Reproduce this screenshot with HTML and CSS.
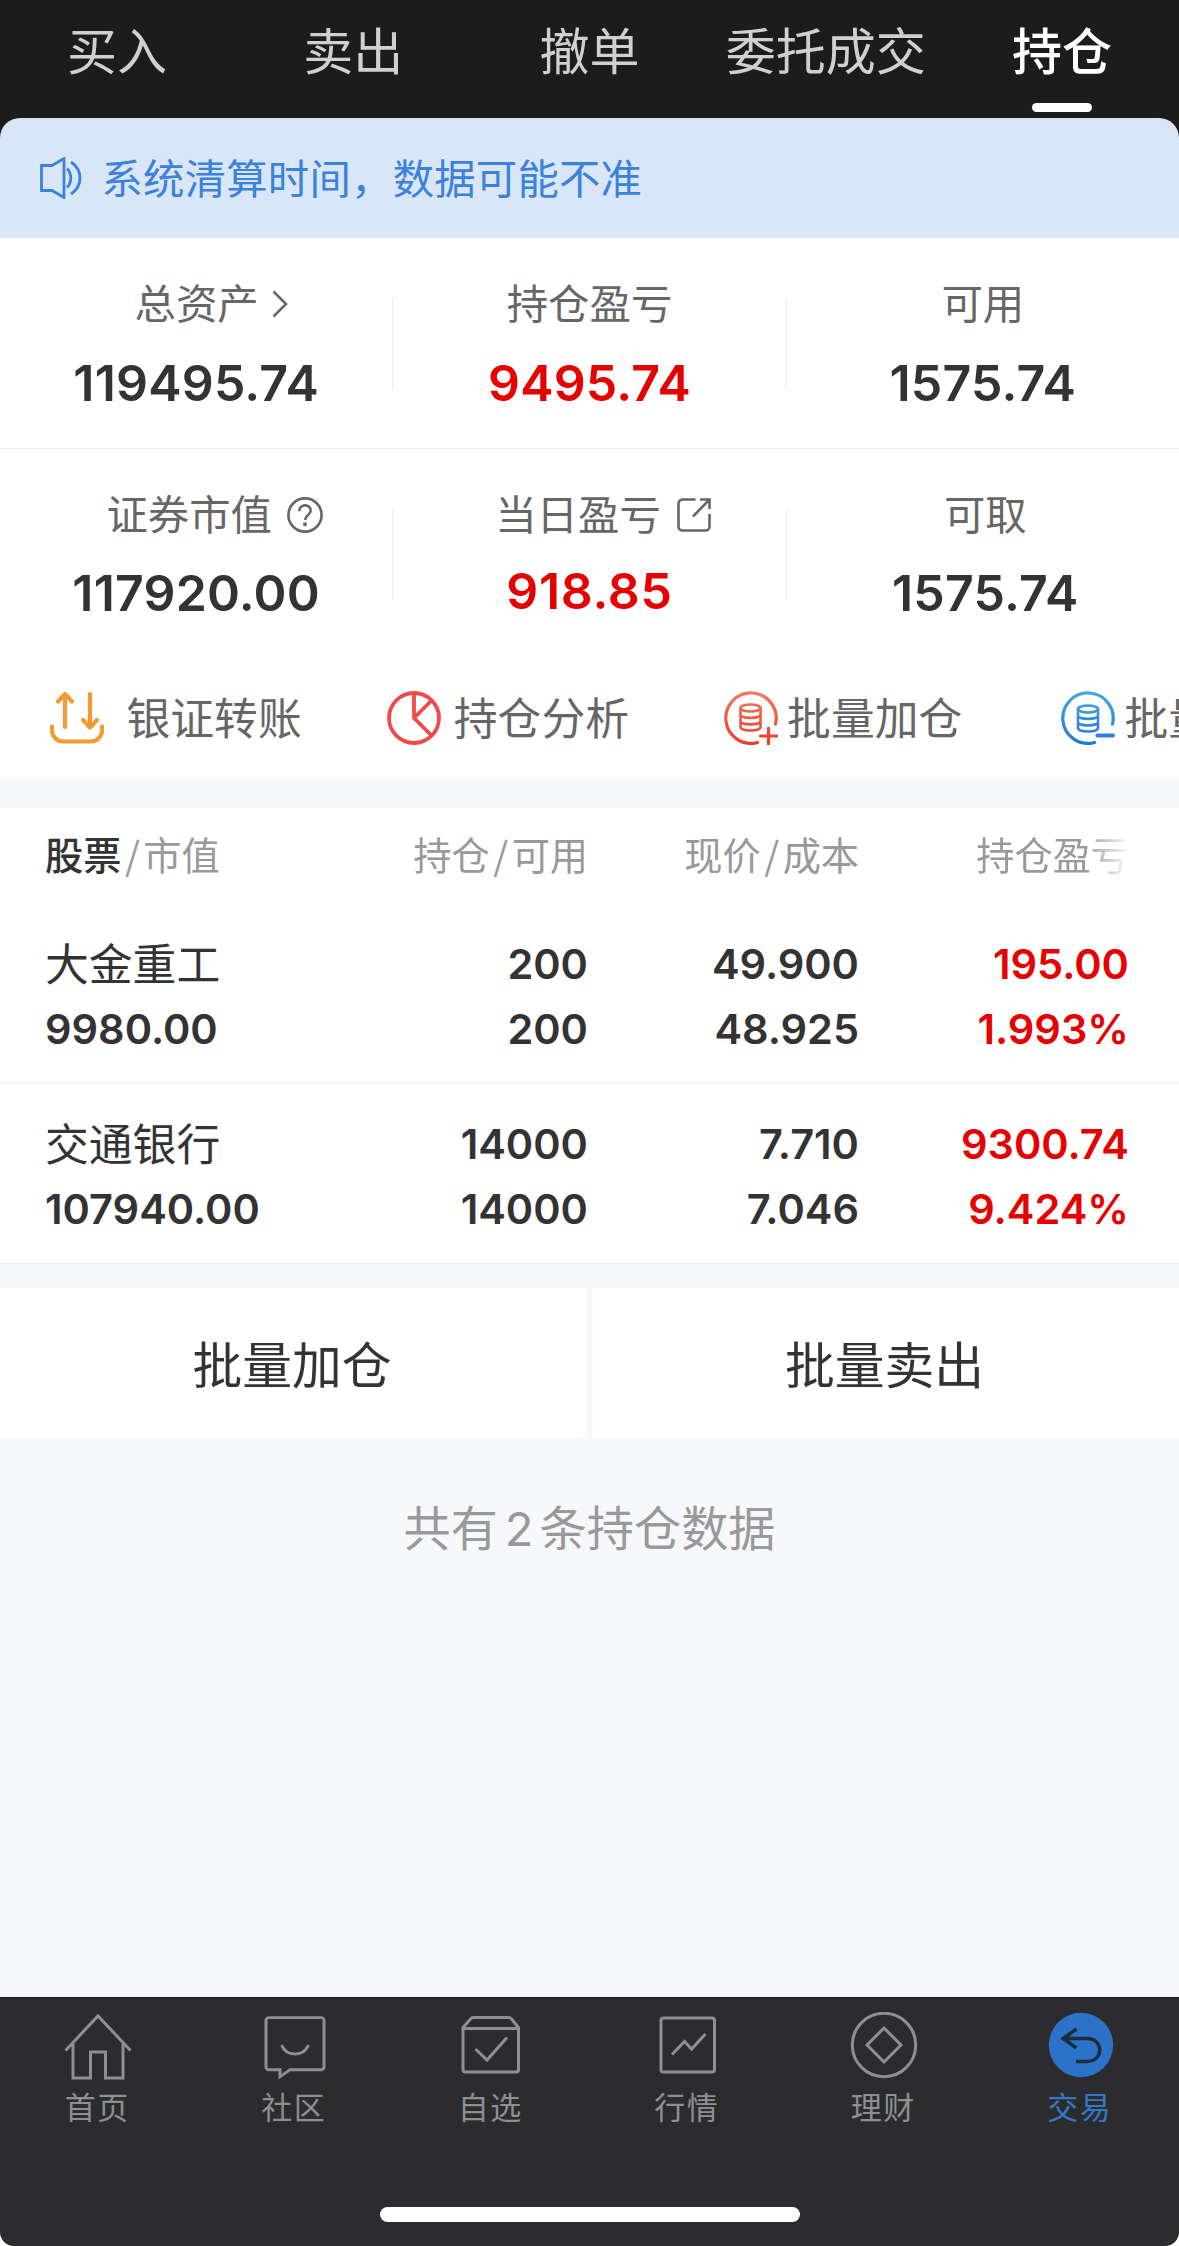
FILE: index.html
```html
<!DOCTYPE html>
<html lang="zh-CN">
<head>
  <meta charset="utf-8">
  <title>持仓</title>
  <meta name="viewport" content="width=device-width, initial-scale=1">
  <link rel="stylesheet" href="styles.css">
</head>
<body>

<div class="page">

  <div class="top">
    <nav class="tabs">
      <a class="tab">买入</a>
      <a class="tab">卖出</a>
      <a class="tab">撤单</a>
      <a class="tab">委托成交</a>
      <a class="tab active">持仓</a>
    </nav>
    <div class="notice">
      <svg class="notice-icon" width="42" height="42" viewBox="0 0 42 42" fill="none" stroke="#3b82dc" stroke-width="2.8">
        <path d="M1.5 8.5H12L24 1.5v39L12 33.5H1.5z"/>
        <path d="M27 11.5c5 5 5 14 0 19"/>
        <path d="M31 5c12 8 12 24 0 32"/>
      </svg>
      <span>系统清算时间，数据可能不准</span>
    </div>
  </div>

  <div class="stats">
    <div class="stat">
      <div class="label">总资产<svg class="arrow" width="16" height="28" viewBox="0 0 16 28" fill="none" stroke="#666" stroke-width="2.5"><path d="M1.5 1.5L14 14 1.5 26.5"/></svg></div>
      <div class="value">119495.74</div>
    </div>
    <div class="split"></div>
    <div class="stat">
      <div class="label">持仓盈亏</div>
      <div class="value red">9495.74</div>
    </div>
    <div class="split"></div>
    <div class="stat">
      <div class="label">可用</div>
      <div class="value">1575.74</div>
    </div>
  </div>

  <div class="stats second">
    <div class="stat">
      <div class="label">证券市值<svg class="help" width="36" height="36" viewBox="0 0 36 36" fill="none" stroke="#666" stroke-width="2.6"><circle cx="18" cy="18" r="16.6"/><path d="M12.3 14.2c0-7.6 11.4-7.6 11.4-.7 0 4.2-5.5 4.6-5.5 9.5"/><circle cx="18" cy="27.3" r="2" fill="#666" stroke="none"/></svg></div>
      <div class="value">117920.00</div>
    </div>
    <div class="split"></div>
    <div class="stat">
      <div class="label">当日盈亏<svg class="share" width="34" height="34" viewBox="0 0 34 34" fill="none" stroke="#666" stroke-width="2.6"><path d="M18.5 1.5H5.5a4 4 0 0 0-4 4v23a4 4 0 0 0 4 4h23a4 4 0 0 0 4-4V16"/><path d="M23 1.5h9.5V11M32 2L16 18.5"/></svg></div>
      <div class="value red today">918.85</div>
    </div>
    <div class="split"></div>
    <div class="stat out">
      <div class="label">可取</div>
      <div class="value">1575.74</div>
    </div>
  </div>

  <div class="actions">
    <a class="action transfer">
      <svg width="54" height="54" viewBox="0 0 54 54" fill="none" stroke="#ef9d33" stroke-width="4.2" stroke-linecap="round" stroke-linejoin="round">
        <path d="M15 36V3M8 10.5L15 3l7 7.5M40 3v33M33 29l7 7.5 7-7.5"/>
        <path d="M2 35.5v4a11 11 0 0 0 11 11h28a11 11 0 0 0 11-11v-4"/>
      </svg>
      <span>银证转账</span>
    </a>
    <a class="action analysis">
      <svg width="54" height="54" viewBox="0 0 54 54" fill="none" stroke="#f24a4a" stroke-width="3.8">
        <circle cx="27" cy="27" r="25"/>
        <path d="M27 2v25l17.5 17.5M27 27L44.5 9.5"/>
      </svg>
      <span>持仓分析</span>
    </a>
    <a class="action">
      <svg width="54" height="54" viewBox="0 0 54 54" fill="none" stroke="url(#gr)" stroke-width="3.2" stroke-linecap="round">
        <defs><linearGradient id="gr" gradientUnits="userSpaceOnUse" x1="0" y1="0" x2="0" y2="54"><stop offset="0" stop-color="#f47a62"/><stop offset="1" stop-color="#ee3a28"/></linearGradient></defs>
        <path d="M33.5 51.5A25.2 25.2 0 1 1 51.5 33"/>
        <ellipse cx="26.5" cy="17" rx="10" ry="3.5" stroke-width="2.6"/>
        <path stroke-width="2.6" d="M16.5 17v19c0 4.7 20 4.7 20 0V17M16.5 23.5c0 4.5 20 4.5 20 0M16.5 30c0 4.5 20 4.5 20 0"/>
        <path d="M44.5 37v16M36.5 45h17"/>
      </svg>
      <span>批量加仓</span>
    </a>
    <a class="action">
      <svg width="54" height="54" viewBox="0 0 54 54" fill="none" stroke="url(#gb)" stroke-width="3.2" stroke-linecap="round">
        <defs><linearGradient id="gb" gradientUnits="userSpaceOnUse" x1="0" y1="0" x2="0" y2="54"><stop offset="0" stop-color="#4ba5e8"/><stop offset="1" stop-color="#2277d8"/></linearGradient></defs>
        <path d="M33.5 51.5A25.2 25.2 0 1 1 51.5 33"/>
        <ellipse cx="27" cy="18" rx="10" ry="3.5" stroke-width="2.6"/>
        <path stroke-width="2.6" d="M17 18v19c0 4.7 20 4.7 20 0V18M17 24.5c0 4.5 20 4.5 20 0M17 31c0 4.5 20 4.5 20 0"/>
        <path stroke="#2f80dc" stroke-width="4" d="M36.500 44.500h15.500"/>
      </svg>
      <span>批量卖出</span>
    </a>
  </div>

  <div class="holdings">
    <div class="row head">
      <div><b>股票</b><i>/</i>市值</div>
      <div>持仓<i>/</i>可用</div>
      <div>现价<i>/</i>成本</div>
      <div class="fade">持仓盈亏</div>
    </div>
    <div class="row">
      <div><p class="name">大金重工</p><p>9980.00</p></div>
      <div><p>200</p><p>200</p></div>
      <div><p>49.900</p><p>48.925</p></div>
      <div class="red"><p>195.00</p><p>1.993%</p></div>
    </div>
    <div class="row">
      <div><p class="name">交通银行</p><p>107940.00</p></div>
      <div><p>14000</p><p>14000</p></div>
      <div><p>7.710</p><p>7.046</p></div>
      <div class="red"><p>9300.74</p><p>9.424%</p></div>
    </div>
  </div>

  <div class="batch">
    <button>批量加仓</button>
    <button>批量卖出</button>
  </div>

  <div class="total">共有<span>2</span>条持仓数据</div>

  <footer class="bottom">
    <nav class="menu">
      <a class="item">
        <svg width="68" height="68" viewBox="0 0 68 68"><path d="M1.500 38.500L34 4l32.500 34.500M9 31.500v34.500h17.500V40h15v26H59V31.500"/></svg>
        <span>首页</span>
      </a>
      <a class="item">
        <svg width="68" height="68" viewBox="0 0 68 68"><path d="M8 5.500h52a3 3 0 0 1 3 3v49.500a3 3 0 0 1-3 3H29L19 68.500v-7.500H8a3 3 0 0 1-3-3V8.500a3 3 0 0 1 3-3z" transform="translate(0 .4) scale(1 .94)"/><path d="M20.500 33c5 12 22 12 27 0"/></svg>
        <span>社区</span>
      </a>
      <a class="item">
        <svg width="68" height="68" viewBox="0 0 68 68"><path d="M6 15.500L13.500 7q1-1.500 3-1.500h35q2 0 3 1.500l7 8.500v42A2.500 2.500 0 0 1 59 60H8.500A2.500 2.500 0 0 1 6 57.500zM6 16.500h55.500M18.500 37L30 48l20-22.500"/></svg>
        <span>自选</span>
      </a>
      <a class="item">
        <svg width="68" height="68" viewBox="0 0 68 68"><rect x="7" y="6" width="53.500" height="54" rx="2.500"/><path d="M18 42.500l12.500-13 7 7.500 14-15"/></svg>
        <span>行情</span>
      </a>
      <a class="item">
        <svg width="68" height="68" viewBox="0 0 68 68"><circle cx="34" cy="33" r="31.700"/><path d="M34 16L51 33 34 50 17 33z"/></svg>
        <span>理财</span>
      </a>
      <a class="item on">
        <svg width="68" height="68" viewBox="0 0 68 68"><circle cx="34" cy="33" r="32.200" fill="#2b72c8" stroke="none"/><path class="back" d="M29.500 17L16 26.500 29.500 36M16.500 26.500H40c17 0 17 23 0 23H29"/></svg>
        <span>交易</span>
      </a>
    </nav>
    <div class="home-bar"></div>
  </footer>

</div>

</body>
</html>
```
FILE: styles.css
```css
* {
  box-sizing: border-box;
}

body {
  margin: 0;
  background: #fff;
  font-family: "Noto Sans CJK SC", sans-serif;
  color: #333;
}

p {
  margin: 0;
}

.page {
  display: flex;
  flex-direction: column;
  height: 2246px;
  overflow: hidden;
  background: #f6f8fb;
  border-radius: 0 0 14px 14px;
}

/* top tabs */
.top {
  background: #1c1c1c;
}

.tabs {
  display: flex;
  height: 118px;
}

.tab {
  flex: 1;
  padding-right: 2px;
  font-size: 50px;
  line-height: 96px;
  text-align: center;
  white-space: nowrap;
  color: #d0d0d0;
}

.tab.active {
  padding-right: 0;
  color: #fff;
  font-weight: 500;
}

.tab.active::after {
  content: "";
  display: block;
  width: 60px;
  height: 9px;
  margin: 7px auto 0;
  border-radius: 5px;
  background: #fff;
}

.notice {
  display: flex;
  align-items: center;
  height: 120px;
  padding-left: 39.5px;
  border-radius: 20px 20px 0 0;
  background: #d9e6f8;
  color: #3b82dc;
  font-size: 41.4px;
  letter-spacing: .2px;
}

.notice span {
  margin-left: 20px;
  padding-bottom: 4px;
  line-height: 60px;
}

/* account numbers */
.stats {
  display: grid;
  grid-template-columns: 1fr 1px 1fr 1px 1fr;
  height: 211px;
  background: #fff;
  border-bottom: 1px solid #ececec;
}

.stats.second {
  height: 210px;
  border-bottom: none;
}

.split {
  height: 90px;
  margin-top: 60px;
  background: #ebebeb;
}

.stat {
  padding-top: 39px;
}

.label {
  display: flex;
  justify-content: center;
  height: 50px;
  font-size: 41.4px;
  line-height: 49px;
  color: #666;
}

.label svg {
  flex: none;
}

.arrow {
  margin: 13px -30px 0 13px;
}

.help {
  margin: 9px -37px 0 15px;
}

.share {
  margin: 10px -27px 0 16px;
}

.value {
  margin-top: 28px;
  font: 600 50px/56px Inter, sans-serif;
  letter-spacing: .2px;
  text-align: center;
}

.value.today {
  margin-top: 26px;
  letter-spacing: .7px;
}

.second .value {
  margin-top: 27px;
}

.second .today {
  margin-top: 25px;
}

.out {
  padding-left: 5px;
}

.red {
  color: #e60000;
}

/* shortcuts, scrolls sideways */
.actions {
  display: flex;
  height: 119px;
  padding: 0 0 1px 49.5px;
  overflow: hidden;
  background: #fff;
}

.action {
  display: flex;
  flex: none;
  align-items: center;
  width: 337.3px;
  font-size: 43.8px;
  color: #666;
}

.action svg {
  flex: none;
}

.action span {
  margin-left: 9px;
  padding-bottom: 4px;
  line-height: 60px;
  white-space: nowrap;
}

.transfer span {
  margin-left: 23px;
}

.analysis span {
  margin-left: 13px;
}

/* holdings */
.holdings {
  margin-top: 30px;
  background: #fff;
}

.row {
  display: grid;
  grid-template-columns: 250px 293px 271px 270px;
  height: 180px;
  padding: 28px 0 0 45px;
  border-bottom: 1px solid #e9eaec;
  font: 600 41.5px/65px Inter, sans-serif;
  text-align: right;
}

.row > div:first-child {
  text-align: left;
}

.row .name {
  height: 65px;
  font: 400 43.8px/61px "Noto Sans CJK SC", sans-serif;
}

.row.head {
  height: 96px;
  padding-top: 0;
  border-bottom: none;
  font: 400 38.2px/92px "Noto Sans CJK SC", sans-serif;
  color: #999;
}

.head b {
  font-weight: 500;
  color: #333;
}

.head i {
  margin: 0 3.5px;
  font-style: normal;
}

.fade {
  -webkit-mask-image: linear-gradient(to right, #000 225px, transparent 272px);
  mask-image: linear-gradient(to right, #000 225px, transparent 272px);
}

/* batch buttons */
.batch {
  display: grid;
  grid-template-columns: 587px 586px;
  gap: 6px;
  height: 150px;
  margin-top: 24px;
}

.batch button {
  border: none;
  padding: 0 3px 3px 0;
  background: #fff;
  color: #333;
  font: 400 49.8px "Noto Sans CJK SC", sans-serif;
}

.total {
  flex: 1;
  padding-top: 58px;
  font-size: 47.2px;
  line-height: 60px;
  text-align: center;
  color: #999;
}

.total span {
  margin: 0 6px 0 7px;
  font-family: Inter, sans-serif;
}

/* bottom menu */
.bottom {
  height: 249px;
  background: #2c2c2e;
  border-top: 1px solid #1a1a1c;
}

.menu {
  display: flex;
  height: 209px;
  padding-top: 14px;
}

.item {
  display: flex;
  flex: 1;
  flex-direction: column;
  align-items: center;
  color: #8e8e93;
  font-size: 31px;
  letter-spacing: 1.5px;
}

.item svg {
  fill: none;
  stroke: #8e8e93;
  stroke-width: 3;
}

.item span {
  margin: 4px 2px 0 0;
  line-height: 44px;
}

.item.on {
  color: #3478c6;
}

.item .back {
  stroke: #1f2c3c;
  stroke-width: 3.4;
}

.home-bar {
  width: 420px;
  height: 15px;
  margin: 0 auto;
  border-radius: 8px;
  background: #fff;
}
```
